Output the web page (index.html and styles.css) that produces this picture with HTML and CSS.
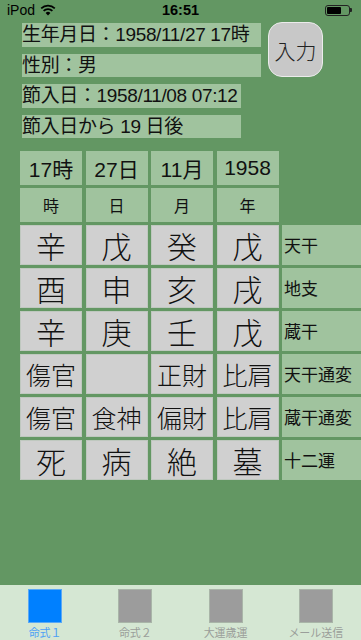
FILE: index.html
```html
<!DOCTYPE html>
<html lang="ja">
<head>
<meta charset="utf-8">
<link rel="stylesheet" href="styles.css">
</head>
<body>
<div class="screen">
  <div class="status">
    <div class="st-left"><span>iPod</span>
      <svg class="wifi" width="16" height="12" viewBox="0 0 16 12"><path d="M8 11.5 L5.6 8.9 A3.4 3.4 0 0 1 10.4 8.9 Z" fill="#000"/><path d="M3.6 6.9 A6.2 6.2 0 0 1 12.4 6.9" stroke="#000" stroke-width="1.7" fill="none"/><path d="M1.2 4.4 A9.6 9.6 0 0 1 14.8 4.4" stroke="#000" stroke-width="1.7" fill="none"/></svg>
    </div>
    <div class="st-time">16:51</div>
    <div class="st-right">
      <div class="battery"><div class="bfill"></div></div><div class="bnub"></div>
    </div>
  </div>

  <div class="header">
    <div class="info">
      <div class="lbl wide">生年月日：1958/11/27 17時</div>
      <div class="lbl wide">性別：男</div>
      <div class="lbl">節入日：1958/11/08 07:12</div>
      <div class="lbl">節入日から 19 日後</div>
    </div>
    <div class="btn">入力</div>
  </div>

  <div class="grid">
    <div class="c g1">17時</div><div class="c g1">27日</div><div class="c g1">11月</div><div class="c g1">1958</div><div></div>
    <div class="c g2">時</div><div class="c g2">日</div><div class="c g2">月</div><div class="c g2">年</div><div></div>

    <div class="c k1">辛</div><div class="c k1">戊</div><div class="c k1">癸</div><div class="c k1">戊</div><div class="c side">天干</div>
    <div class="c k1">酉</div><div class="c k1">申</div><div class="c k1">亥</div><div class="c k1">戌</div><div class="c side">地支</div>
    <div class="c k1">辛</div><div class="c k1">庚</div><div class="c k1">壬</div><div class="c k1">戊</div><div class="c side">蔵干</div>
    <div class="c k2">傷官</div><div class="c k2"></div><div class="c k2">正財</div><div class="c k2">比肩</div><div class="c side">天干通変</div>
    <div class="c k2">傷官</div><div class="c k2">食神</div><div class="c k2">偏財</div><div class="c k2">比肩</div><div class="c side">蔵干通変</div>
    <div class="c k1">死</div><div class="c k1">病</div><div class="c k1">絶</div><div class="c k1">墓</div><div class="c side">十二運</div>
  </div>

  <div class="spacer"></div>

  <div class="tabbar">
    <div class="tab active"><div class="ticon"></div><div class="tlabel">命式１</div></div>
    <div class="tab"><div class="ticon"></div><div class="tlabel">命式２</div></div>
    <div class="tab"><div class="ticon"></div><div class="tlabel">大運歳運</div></div>
    <div class="tab"><div class="ticon"></div><div class="tlabel">メール送信</div></div>
  </div>
</div>
</body>
</html>
```

FILE: styles.css
```css
* { box-sizing: border-box; }
html, body { margin: 0; padding: 0; }
body {
  width: 361px;
  height: 640px;
  overflow: hidden;
  background: #639763;
  font-family: "Liberation Sans", "Noto Sans CJK JP", sans-serif;
  color: #111;
}
.screen {
  width: 361px;
  height: 640px;
  display: flex;
  flex-direction: column;
}
.status {
  height: 20px;
  display: flex;
  align-items: center;
  justify-content: space-between;
  padding: 0 9px 0 7px;
  font-size: 14px;
  color: #000;
  position: relative;
}
.st-left { display: flex; align-items: center; gap: 5px; }
.wifi { display: block; }
.st-time {
  position: absolute;
  left: 0; right: 0;
  text-align: center;
  font-weight: bold;
  font-size: 14.5px;
}
.st-right { display: flex; align-items: center; }
.battery {
  width: 25px;
  height: 11px;
  border: 1px solid #222;
  border-radius: 3px;
  padding: 1px;
}
.bfill { width: 14px; height: 100%; background: #000; border-radius: 1px; }
.bnub { width: 2px; height: 4px; background: #222; border-radius: 0 1px 1px 0; }

.header {
  display: flex;
  padding: 2px 0 0 22px;
  gap: 7px;
}
.info {
  display: flex;
  flex-direction: column;
  gap: 7px;
  padding-top: 1px;
}
.lbl {
  background: #a0c39e;
  width: 219px;
  height: 23.5px;
  line-height: 23.5px;
  font-size: 19px;
  white-space: nowrap;
  letter-spacing: -0.35px;
}
.lbl.wide { width: 239px; }
.btn {
  width: 55px;
  height: 55px;
  border-radius: 14px;
  background: #c8c8c8;
  border: 1.5px solid #ececec;
  display: flex;
  align-items: center;
  justify-content: center;
  font-size: 21px;
  color: #222;
  font-weight: 300;
}

.grid {
  margin-top: 13px;
  padding-left: 20px;
  display: grid;
  grid-template-columns: 62px 62px 62px 62px 1fr;
  grid-template-rows: 33.5px 33.5px repeat(6, 39.5px);
  gap: 3.5px;
}
.c {
  display: flex;
  align-items: center;
  justify-content: center;
  white-space: nowrap;
  overflow: hidden;
}
.g1 { background: #a0c39e; font-size: 21px; }
.g2 { background: #a0c39e; font-size: 16px; }
.k1 { background: #d0d0d0; font-size: 30px; border: 1px solid #bfc8bf; font-weight: 300; }
.k2 { background: #d0d0d0; font-size: 25px; border: 1px solid #bfc8bf; font-weight: 300; }
.side {
  background: #a0c39e;
  justify-content: flex-start;
  padding-left: 2px;
  font-size: 17px;
}
.spacer { flex: 1; }
.tabbar {
  height: 55px;
  background: #d5e7d3;
  display: flex;
}
.tab {
  flex: 1;
  display: flex;
  flex-direction: column;
  align-items: center;
  padding-top: 4px;
}
.ticon {
  width: 34px;
  height: 34px;
  background: #9c9c9c;
  border: 1px solid #a9b5a8;
}
.tab.active .ticon { background: #0080ff; border-color: #5aa8f5; }
.tlabel {
  font-size: 11px;
  margin-top: 1px;
  color: #9a9e9a;
  font-family: "Noto Sans CJK JP", sans-serif;
}
.tab.active .tlabel { color: #4da0f5; }
```
